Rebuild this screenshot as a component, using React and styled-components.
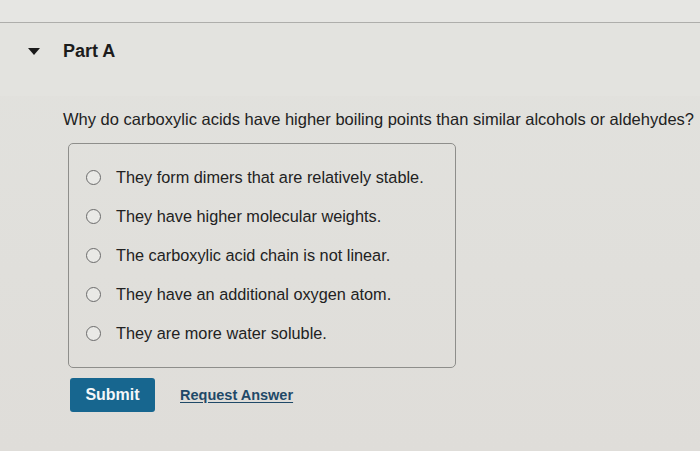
import React from 'react';
import styled, { createGlobalStyle } from 'styled-components';

const Global = createGlobalStyle`
  html, body {
    margin: 0;
    padding: 0;
    background: #e1e0dc;
    font-family: "Liberation Sans", Arial, sans-serif;
    color: #1e1e1e;
  }
`;

const Page = styled.div`
  width: 700px;
  height: 451px;
  overflow: hidden;
  background: linear-gradient(180deg, #e2e2de 0%, #e0dfdb 60%, #dfddd9 100%);
`;

const TopStrip = styled.div`
  height: 22px;
  background: #e6e6e3;
  border-bottom: 1.5px solid #aeaeab;
`;

const Header = styled.div`
  height: 73px;
  box-sizing: border-box;
  padding: 0 0 17px 28px;
  display: flex;
  align-items: center;
  gap: 23px;
  background: #e3e3df;
`;

const Caret = styled.span`
  width: 0;
  height: 0;
  border-left: 6px solid transparent;
  border-right: 6px solid transparent;
  border-top: 7px solid #1a1a1a;
  margin-top: 1px;
`;

const Title = styled.h2`
  margin: 0;
  font-size: 18px;
  font-weight: 700;
  color: #1c1c1c;
`;

const Body = styled.div`
  padding: 13px 0 0 63px;
`;

const Question = styled.p`
  margin: 0;
  font-size: 16.5px;
  line-height: 21px;
  white-space: nowrap;
  color: #222;
`;

const Choices = styled.div`
  margin: 13px 0 0 5px;
  width: 388px;
  box-sizing: border-box;
  border: 1.5px solid #8e8e8b;
  border-radius: 5px;
  padding: 14px 0 14px 17px;
  display: flex;
  flex-direction: column;
`;

const Choice = styled.label`
  height: 39px;
  display: flex;
  align-items: center;
  gap: 15px;
  font-size: 16.3px;
  color: #222;
`;

const Radio = styled.span`
  width: 15px;
  height: 15px;
  box-sizing: border-box;
  border: 1.5px solid #6b6b6b;
  border-radius: 50%;
  background: #e9e9e6;
  flex: none;
`;

const Actions = styled.div`
  margin: 10px 0 0 7px;
  display: flex;
  align-items: center;
  gap: 25px;
`;

const Submit = styled.button`
  width: 85px;
  height: 34px;
  border: none;
  border-radius: 3px;
  background: #17668f;
  color: #f4f7f9;
  font-family: inherit;
  font-size: 16px;
  font-weight: 700;
  padding: 0;
`;

const Link = styled.a`
  font-size: 14.5px;
  font-weight: 700;
  color: #1f4968;
  text-decoration: underline;
  text-underline-offset: 2px;
`;

const options = [
  'They form dimers that are relatively stable.',
  'They have higher molecular weights.',
  'The carboxylic acid chain is not linear.',
  'They have an additional oxygen atom.',
  'They are more water soluble.',
];

export default function App() {
  return (
    <Page>
      <Global />
      <TopStrip />
      <Header>
        <Caret />
        <Title>Part A</Title>
      </Header>
      <Body>
        <Question>
          Why do carboxylic acids have higher boiling points than similar alcohols or aldehydes?
        </Question>
        <Choices>
          {options.map((o) => (
            <Choice key={o}>
              <Radio />
              {o}
            </Choice>
          ))}
        </Choices>
        <Actions>
          <Submit>Submit</Submit>
          <Link>Request Answer</Link>
        </Actions>
      </Body>
    </Page>
  );
}
